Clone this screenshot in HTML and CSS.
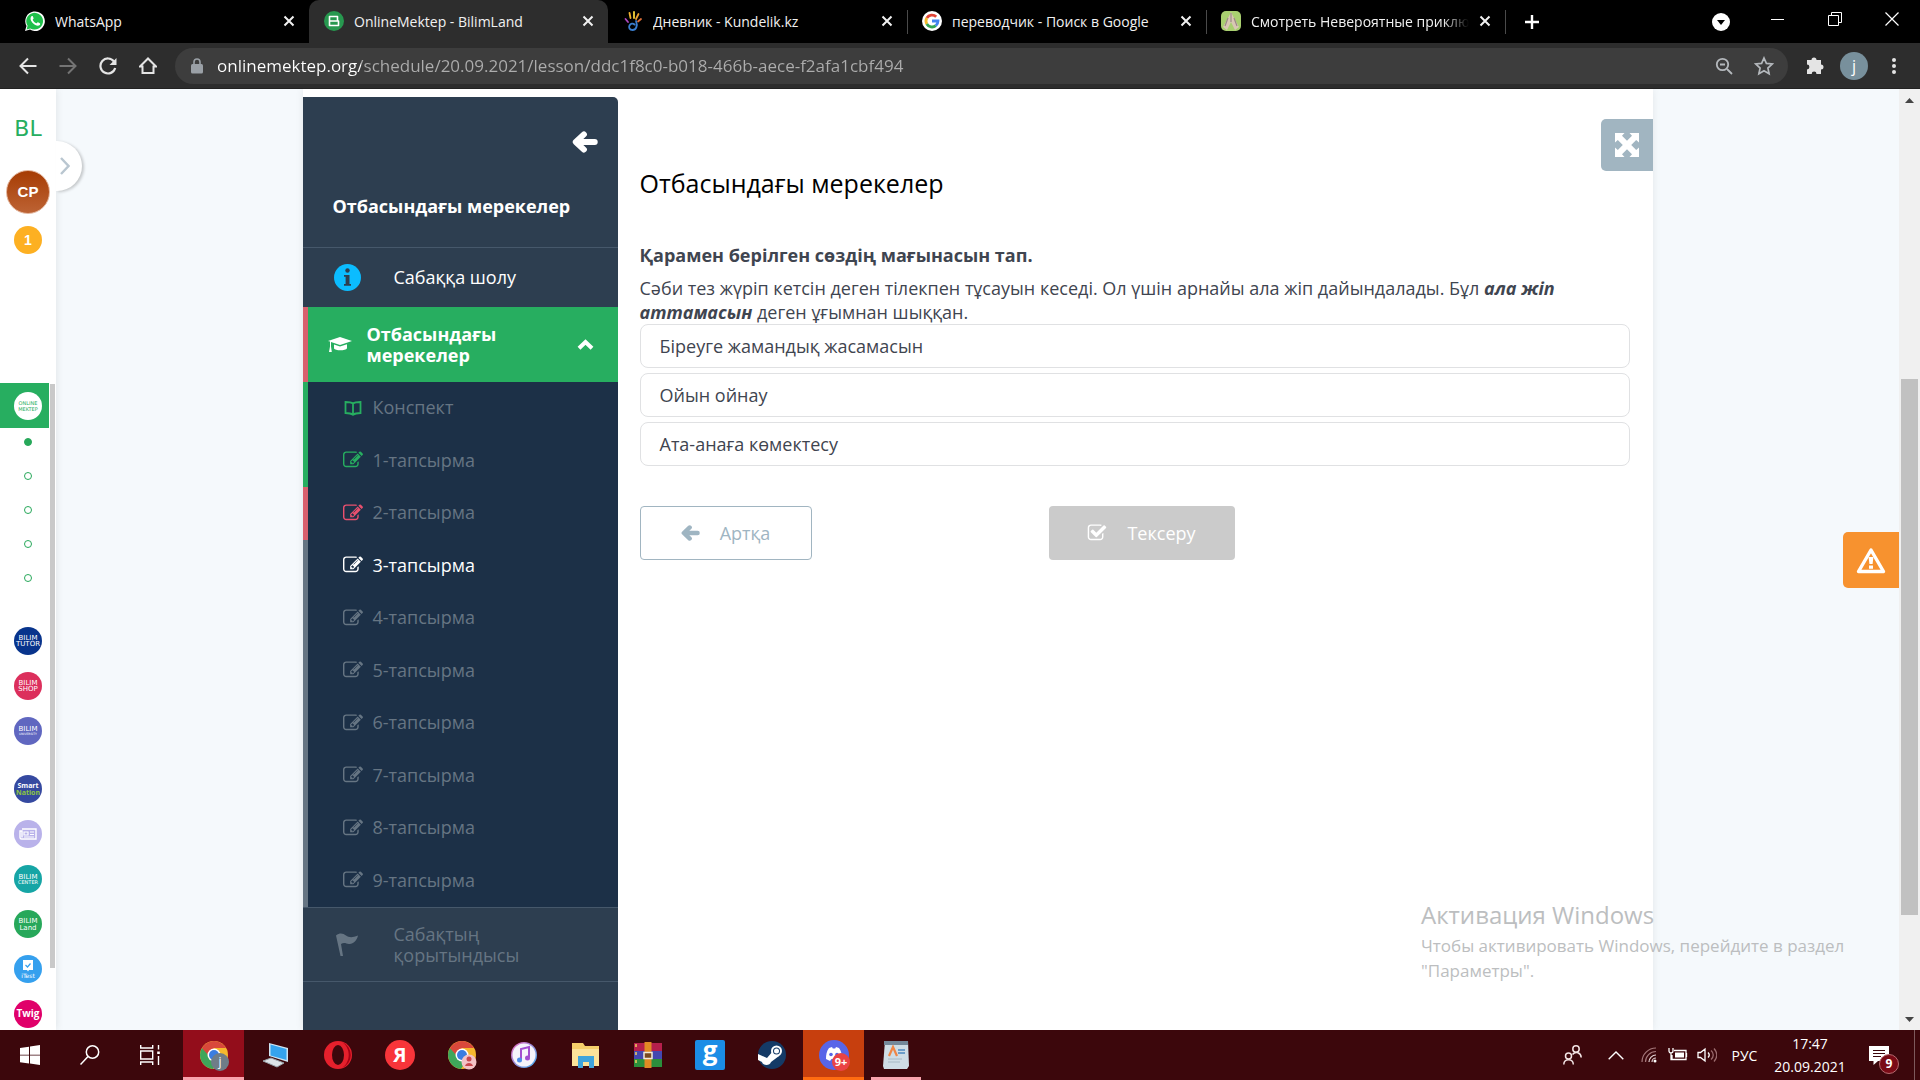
FILE: index.html
```html
<!DOCTYPE html>
<html lang="kk">
<head>
    <meta charset="UTF-8">
    <meta name="viewport" content="width=device-width, initial-scale=1.0">
    <title>OnlineMektep - BilimLand</title>
    <link rel="stylesheet" href="styles.css">
</head>
<body>
    <!-- shared icons -->
    <svg class="sprite" width="0" height="0">
        <symbol id="i-edit" viewBox="0 0 1792 1792"><path d="M888 1184l116-116-152-152-116 116v56h96v96h56zm440-720q-16-16-33 1l-350 350q-17 17-1 33t33-1l350-350q17-17 1-33zm80 594v190q0 119-84.500 203.500t-203.500 84.500h-832q-119 0-203.500-84.500t-84.500-203.500v-832q0-119 84.500-203.500t203.500-84.500h832q63 0 117 25 15 7 18 23 3 17-9 29l-49 49q-14 14-32 8-23-6-45-6h-832q-66 0-113 47t-47 113v832q0 66 47 113t113 47h832q66 0 113-47t47-113v-126q0-13 9-22l64-64q15-15 35-7t20 29zm-96-738l288 288-672 672h-288v-288zm444 132l-92 92-288-288 92-92q28-28 68-28t68 28l152 152q28 28 28 68t-28 68z"/></symbol>
        <symbol id="i-check" viewBox="0 0 1792 1792"><path d="M1472 930v318q0 119-84.500 203.500t-203.500 84.500h-832q-119 0-203.500-84.500t-84.500-203.500v-832q0-119 84.500-203.500t203.500-84.500h832q63 0 117 25 15 7 18 23 3 17-9 29l-49 49q-10 10-23 10-3 0-9-2-23-6-45-6h-832q-66 0-113 47t-47 113v832q0 66 47 113t113 47h832q66 0 113-47t47-113v-254q0-13 9-22l64-64q10-10 23-10 6 0 12 3 20 8 20 29zm231-489l-814 814q-24 24-57 24t-57-24l-430-430q-24-24-24-57t24-57l110-110q24-24 57-24t57 24l263 263 647-647q24-24 57-24t57 24l110 110q24 24 24 57t-24 57z"/></symbol>
        <symbol id="i-back" viewBox="0 0 24 20"><path d="M11 3L3.500 10l7.500 7M4 10h17" fill="none" stroke="currentColor" stroke-width="5.500" stroke-linecap="round" stroke-linejoin="round"/></symbol>
        <symbol id="i-x" viewBox="0 0 12 12"><path d="M1.500 1.500l9 9m0-9l-9 9" stroke="currentColor" stroke-width="2"/></symbol>
        <symbol id="i-chrome" viewBox="0 0 32 32">
            <circle cx="16" cy="16" r="14" fill="#f5b82e"/>
            <path d="M3.900 9A14 14 0 0 0 15 30l7-11-6-3z" fill="#3fa65a"/>
            <path d="M3.900 9A14 14 0 0 1 28.100 9H16l-6 7z" fill="#d9483b"/>
            <circle cx="16" cy="16" r="6.500" fill="#fff"/>
            <circle cx="16" cy="16" r="5" fill="#3b7de0"/>
        </symbol>
    </svg>

    <div class="tabs">
        <div class="tab">
            <svg class="fav" viewBox="0 0 20 20"><path d="M0 20l1.500-5A9.800 9.800 0 1 1 5 18.600z" fill="#fff"/><path d="M1.600 18.400l1-3.600A8.400 8.400 0 1 1 5.300 17.400z" fill="#1fc04b"/><path d="M6.500 5.200c-2 2-.5 5 1.500 7s5 3.500 6.800 1.700c.6-.8.500-1.400 0-1.700l-1.800-1c-.8-.2-1 1-1.700 1.100-1.200-.3-3.200-2.200-3.600-3.500 0-.6 1-.9.900-1.600L7.800 5.200c-.3-.4-.9-.3-1.300 0z" fill="#fff"/></svg>
            <span class="tab-title">WhatsApp</span>
            <button class="tab-close" aria-label="Close"><svg width="12" height="12"><use href="#i-x"/></svg></button>
        </div>
        <div class="tab active">
            <svg class="fav" viewBox="0 0 20 20"><circle cx="10" cy="10" r="10" fill="#27984f"/><path d="M5.500 5.500h8v4.500h-8zM5.500 10h9v4.500h-9z" fill="none" stroke="#fff" stroke-width="1.600" stroke-linejoin="round"/></svg>
            <span class="tab-title">OnlineMektep - BilimLand</span>
            <button class="tab-close" aria-label="Close"><svg width="12" height="12"><use href="#i-x"/></svg></button>
        </div>
        <div class="tab">
            <svg class="fav" viewBox="0 0 20 20" fill="none" stroke-linecap="round" stroke-width="1.800"><path d="M6.500 2l1 5" stroke="#f0b030"/><path d="M11 1v6" stroke="#f7d43a"/><path d="M15.500 3L13 8" stroke="#e8a030"/><path d="M2.500 8l2.500 3" stroke="#b04ac0"/><path d="M18 8l-3 2.500" stroke="#e0703a"/><path d="M13 10c2 5 0 9-3.500 9-3 0-4-2.500-3-4.500s3.500-2.500 5-1" stroke="#3b7fd0"/></svg>
            <span class="tab-title">Дневник - Kundelik.kz</span>
            <button class="tab-close" aria-label="Close"><svg width="12" height="12"><use href="#i-x"/></svg></button>
        </div>
        <div class="tab split">
            <svg class="fav" viewBox="0 0 20 20"><circle cx="10" cy="10" r="10" fill="#fff"/><g fill="none" stroke-width="2.800"><path d="M14.200 5.800A6 6 0 0 0 4.800 7" stroke="#e04437"/><path d="M4.800 7a6 6 0 0 0 0 6" stroke="#f3b92c"/><path d="M4.800 13a6 6 0 0 0 9 1.600" stroke="#33a552"/><path d="M13.800 14.600A6 6 0 0 0 16 10h-6" stroke="#4283ee"/></g></svg>
            <span class="tab-title">переводчик - Поиск в Google</span>
            <button class="tab-close" aria-label="Close"><svg width="12" height="12"><use href="#i-x"/></svg></button>
        </div>
        <div class="tab split">
            <svg class="fav" viewBox="0 0 20 20"><rect width="20" height="20" rx="5" fill="#a9cf70"/><path d="M10 1l3 6 5 9-4 3-4-8-4 8-4-3 5-9z" fill="#d9c7b4"/><path d="M10 2v9M7 7l-3 8m9-8l3 8" stroke="#9a8a86" stroke-width="1.200"/></svg>
            <span class="tab-title fade">Смотреть Невероятные приклю</span>
            <button class="tab-close" aria-label="Close"><svg width="12" height="12"><use href="#i-x"/></svg></button>
        </div>
        <div class="tab-new split">
            <button aria-label="New tab"><svg width="16" height="16" viewBox="0 0 16 16"><path d="M8 1v14M1 8h14" stroke="#fff" stroke-width="2.400"/></svg></button>
        </div>
        <div class="win-buttons">
            <button class="tab-search" aria-label="Search tabs"><svg width="18" height="18" viewBox="0 0 18 18"><circle cx="9" cy="9" r="9" fill="#fff"/><path d="M5 7h8l-4 5z" fill="#000"/></svg></button>
            <button aria-label="Minimize"><svg width="14" height="14" viewBox="0 0 14 14"><path d="M0 7.500h13" stroke="#fff"/></svg></button>
            <button aria-label="Restore"><svg width="14" height="14" viewBox="0 0 14 14" fill="none" stroke="#fff"><path d="M.5 3.500h10v10H.5zM3.500 3V.5h10v10H11"/></svg></button>
            <button aria-label="Close window"><svg width="14" height="14" viewBox="0 0 14 14"><path d="M.5 .5l13 13m0-13l-13 13" stroke="#fff" stroke-width="1.200"/></svg></button>
        </div>
    </div>

    <div class="toolbar">
        <button aria-label="Back"><svg width="18" height="18" viewBox="0 0 18 18" fill="none" stroke="#e4e4e4" stroke-width="2"><path d="M9 1.500L1.500 9 9 16.500M2 9h15.500"/></svg></button>
        <button aria-label="Forward"><svg width="18" height="18" viewBox="0 0 18 18" fill="none" stroke="#747474" stroke-width="2"><path d="M9 1.500L16.500 9 9 16.500M16 9H.5"/></svg></button>
        <button aria-label="Reload"><svg width="18" height="18" viewBox="0 0 18 18" fill="none" stroke="#e4e4e4" stroke-width="2.200"><path d="M15 4.500A7.500 7.500 0 1 0 16.200 11"/><path d="M17.500 1v7h-7z" fill="#e4e4e4" stroke="none"/></svg></button>
        <button aria-label="Home"><svg width="18" height="18" viewBox="0 0 18 18" fill="none" stroke="#e4e4e4" stroke-width="2"><path d="M1 9.500l8-8 8 8h-2.500V16h-11V9.500z"/></svg></button>
        <div class="address">
            <svg width="12" height="16" viewBox="0 0 12 16"><rect y="6" width="12" height="9.500" rx="1.500" fill="#9aa0a6"/><path d="M3 6V4a3 3 0 0 1 6 0v2" fill="none" stroke="#9aa0a6" stroke-width="1.600"/></svg>
            <input type="text" aria-label="Address" value="onlinemektep.org/schedule/20.09.2021/lesson/ddc1f8c0-b018-466b-aece-f2afa1cbf494">
            <button aria-label="Zoom"><svg width="18" height="18" viewBox="0 0 18 18" fill="none" stroke="#b4b8bc" stroke-width="1.800"><circle cx="7.500" cy="7.500" r="5.700"/><path d="M12 12l5 5M5 7.500h5"/></svg></button>
            <button aria-label="Bookmark"><svg width="20" height="20" viewBox="0 0 20 20" fill="none" stroke="#b4b8bc" stroke-width="1.700"><path d="M10 2l2.400 5.400 5.900.6-4.400 4 1.200 5.800L10 14.800l-5.100 3L6.100 12 1.700 8l5.900-.6z"/></svg></button>
        </div>
        <button aria-label="Extensions"><svg width="19" height="19" viewBox="0 0 19 19" fill="#e4e4e4"><path d="M2 4h4.500a2.500 2.500 0 1 1 5 0H16v4.500a2.500 2.500 0 1 1 0 5V18h-4.500a2.400 2.400 0 1 0-4.800 0H2v-4.600a2.400 2.400 0 1 0 0-4.800z"/></svg></button>
        <button class="profile">j</button>
        <button aria-label="Menu"><svg width="6" height="18" viewBox="0 0 6 18" fill="#e4e4e4"><circle cx="3" cy="3" r="2"/><circle cx="3" cy="9" r="2"/><circle cx="3" cy="15" r="2"/></svg></button>
    </div>

    <div class="page">
        <nav class="rail">
            <a class="rail-logo" href="#">BL</a>
            <a class="avatar" href="#">СР</a>
            <a class="coins" href="#">1</a>
            <button class="rail-toggle" aria-label="Menu"><svg width="10" height="18" viewBox="0 0 10 18" fill="none" stroke="#b9c6d0" stroke-width="2.400"><path d="M1 1l7.500 8L1 17"/></svg></button>
            <div class="rail-scroll">
                <div class="rail-links">
                    <a class="rail-current" href="#"><svg class="brand" viewBox="0 0 28 28"><circle cx="14" cy="14" r="14" fill="#fff"/><text class="sm" x="14" y="13" fill="#27ae60">ONLINE</text><text class="sm" x="14" y="19" fill="#27ae60">MEKTEP</text></svg></a>
                    <div class="dots"><a class="on" href="#" aria-label="1"></a><a href="#" aria-label="2"></a><a href="#" aria-label="3"></a><a href="#" aria-label="4"></a><a href="#" aria-label="5"></a></div>
                    <div class="brands">
                        <a href="#"><svg class="brand" viewBox="0 0 28 28"><circle cx="14" cy="14" r="14" fill="#08348c"/><text class="md" x="14" y="13">BILIM</text><text class="md" x="14" y="19">TUTOR</text></svg></a>
                        <a href="#"><svg class="brand" viewBox="0 0 28 28"><circle cx="14" cy="14" r="14" fill="#dc2f5c"/><text class="md" x="14" y="13">BILIM</text><text class="md" x="14" y="19">SHOP</text></svg></a>
                        <a href="#"><svg class="brand" viewBox="0 0 28 28"><circle cx="14" cy="14" r="14" fill="#6067c0"/><text class="md" x="14" y="14">BILIM</text><text class="xs" x="14" y="18">UNIVERSITY</text></svg></a>
                    </div>
                    <div class="brands">
                        <a href="#"><svg class="brand" viewBox="0 0 28 28"><circle cx="14" cy="14" r="14" fill="#3549a0"/><text class="lg" x="14" y="13">Smart</text><text class="lg" x="14" y="20" fill="#8dc63f">Nation</text></svg></a>
                        <a href="#"><svg class="brand" viewBox="0 0 28 28"><circle cx="14" cy="14" r="14" fill="#b9b2ea"/><path d="M8 9h14v10H7.500A1.500 1.500 0 0 1 6 17.500V11h2v6.500" fill="none" stroke="#fff" stroke-width="1.400"/><path d="M10 12h4v3h-4zM16 12h4M16 14.500h4M10 17h10" fill="none" stroke="#fff" stroke-width="1.200"/></svg></a>
                        <a href="#"><svg class="brand" viewBox="0 0 28 28"><circle cx="14" cy="14" r="14" fill="#16a5a5"/><text class="md" x="14" y="14">BILIM</text><text class="sm" x="14" y="19">CENTER</text></svg></a>
                        <a href="#"><svg class="brand" viewBox="0 0 28 28"><circle cx="14" cy="14" r="14" fill="#27a85a"/><text class="md" x="14" y="13">BILIM</text><text class="md" x="14" y="20">Land</text></svg></a>
                        <a href="#"><svg class="brand" viewBox="0 0 28 28"><circle cx="14" cy="14" r="14" fill="#35a0ee"/><path d="M9 5h10v10h-4l-1 1.500-1-1.500H9z" fill="#fff"/><path d="M11.500 10l2 2 3-3.500" fill="none" stroke="#35a0ee" stroke-width="1.200"/><text x="14" y="23">iTest</text></svg></a>
                        <a href="#"><svg class="brand" viewBox="0 0 28 28"><circle cx="14" cy="14" r="14" fill="#e0006a"/><text class="xl" x="14" y="17">Twig</text></svg></a>
                    </div>
                </div>
                <div class="rail-bar"></div>
            </div>
        </nav>

        <main class="stage">
            <div class="card">
                <aside class="lesson-nav">
                    <div class="nav-head">
                        <button aria-label="Артқа"><svg width="26" height="22"><use href="#i-back"/></svg></button>
                        <h2>Отбасындағы мерекелер</h2>
                    </div>
                    <a class="nav-item" href="#">
                        <svg width="27" height="27" viewBox="0 0 27 27"><circle cx="13.500" cy="13.500" r="13.500" fill="#0bbcff"/><circle cx="13.500" cy="6.500" r="2.200" fill="#2d3e50"/><path d="M10 11h5.500v9H17v1.800h-7V20h1.600v-7.200H10z" fill="#2d3e50"/></svg>
                        <span>Сабаққа шолу</span>
                    </a>
                    <a class="nav-section" href="#">
                        <svg width="24" height="18" viewBox="0 0 24 18" fill="#fff"><path d="M12 1l12 4-12 4L3 6v4.500l.8 5.500H1l1-5.500V5.600L0 5z"/><path d="M6 8.500l6 2 7-2.300v4C18 15 7 15 6 12.500z"/></svg>
                        <span>Отбасындағы мерекелер</span>
                        <svg width="17" height="11" viewBox="0 0 17 11"><path d="M2 9.300l6.500-6.300L15 9.300" fill="none" stroke="#fff" stroke-width="4"/></svg>
                    </a>
                    <div class="tasks">
                        <a class="task done" href="#"><svg viewBox="0 0 20 20" fill="none" stroke="currentColor" stroke-width="1.800"><path d="M10 5.500C8 4 5 4 2.500 4v11c3 0 5.500.2 7.500 1.800 2-1.600 4.500-1.800 7.500-1.800V4C15 4 12 4 10 5.500zM10 5.500v11"/></svg>Конспект</a>
                        <a class="task done" href="#"><svg><use href="#i-edit"/></svg>1-тапсырма</a>
                        <a class="task wrong" href="#"><svg><use href="#i-edit"/></svg>2-тапсырма</a>
                        <a class="task current" href="#"><svg><use href="#i-edit"/></svg>3-тапсырма</a>
                        <a class="task" href="#"><svg><use href="#i-edit"/></svg>4-тапсырма</a>
                        <a class="task" href="#"><svg><use href="#i-edit"/></svg>5-тапсырма</a>
                        <a class="task" href="#"><svg><use href="#i-edit"/></svg>6-тапсырма</a>
                        <a class="task" href="#"><svg><use href="#i-edit"/></svg>7-тапсырма</a>
                        <a class="task" href="#"><svg><use href="#i-edit"/></svg>8-тапсырма</a>
                        <a class="task" href="#"><svg><use href="#i-edit"/></svg>9-тапсырма</a>
                    </div>
                    <a class="nav-item summary" href="#">
                        <svg width="27" height="27" viewBox="0 0 27 27" fill="#667583"><path d="M2 4.500c4-3 7-2 10 0s6 2.500 12 0c-1 5-5 9-9 8.500-3-.5-5-2-8 0l2 12H6.500z"/></svg>
                        <span>Сабақтың қорытындысы</span>
                    </a>
                </aside>

                <section class="lesson">
                    <button class="expand" aria-label="Fullscreen"><svg width="24" height="24" viewBox="0 0 24 24" fill="#fff"><path d="M0 0h9.500L7 2.800l5 5 5-5L14.500 0H24v9.500L21.200 7l-5 5 5 5 2.800-2.500V24h-9.500l2.500-2.800-5-5-5 5L9.500 24H0v-9.500L2.800 17l5-5-5-5L0 9.500z"/></svg></button>
                    <h1>Отбасындағы мерекелер</h1>
                    <p class="question">Қарамен берілген сөздің мағынасын тап.</p>
                    <p class="text">Сәби тез жүріп кетсін деген тілекпен тұсауын кеседі. Ол үшін арнайы ала жіп дайындалады. Бұл <b><i>ала жіп аттамасын</i></b> деген ұғымнан шыққан.</p>
                    <div class="options">
                        <button>Біреуге жамандық жасамасын</button>
                        <button>Ойын ойнау</button>
                        <button>Ата-анаға көмектесу</button>
                    </div>
                    <div class="actions">
                        <button class="prev"><svg width="19" height="16"><use href="#i-back"/></svg>Артқа</button>
                        <button class="check"><svg width="20" height="20"><use href="#i-check"/></svg>Тексеру</button>
                    </div>
                </section>
            </div>
            <button class="report" aria-label="Report"><svg width="30" height="27" viewBox="0 0 30 27"><path d="M15 3L27.500 24.500h-25z" fill="none" stroke="#fff" stroke-width="3.400" stroke-linejoin="round"/><path d="M12.600 10h4.800l-.8 7h-3.200zM13 18.500h4v3.200h-4z" fill="#fff"/></svg></button>
        </main>

        <div class="scrollbar">
            <svg width="9" height="5" viewBox="0 0 9 5"><path d="M0 5L4.500 0 9 5z" fill="#454545"/></svg>
            <div class="track"><div class="thumb"></div></div>
            <svg width="9" height="5" viewBox="0 0 9 5"><path d="M0 0l4.500 5L9 0z" fill="#454545"/></svg>
        </div>

        <div class="watermark">
            <p class="wm-title">Активация Windows</p>
            <p>Чтобы активировать Windows, перейдите в раздел "Параметры".</p>
        </div>
    </div>

    <footer class="taskbar">
        <div class="system">
            <button aria-label="Start"><svg width="20" height="20" viewBox="0 0 20 20" fill="#fff"><path d="M0 3l9-1.300v8H0zM10 1.500L20 0v9.700H10zM0 10.500h9v8L0 17.200zM10 10.500h10V20l-10-1.500z"/></svg></button>
            <button aria-label="Search"><svg width="20" height="20" viewBox="0 0 20 20" fill="none" stroke="#fff" stroke-width="1.500"><circle cx="12.500" cy="7" r="6.200"/><path d="M8 11.500L.5 19.500"/></svg></button>
            <button aria-label="Task view"><svg width="20" height="20" viewBox="0 0 20 20" fill="none" stroke="#fff" stroke-width="1.400"><path d="M.7 0v3h12V0M.7 20v-3h12v3M.7 6h12v8H.7zM18.500 0v4.500M18.500 11v9"/><path d="M17.200 6.500h2.600V9h-2.600z" fill="#fff" stroke="none"/></svg></button>
        </div>
        <div class="apps">
            <button class="app active" aria-label="Chrome"><svg viewBox="0 0 32 32"><use href="#i-chrome"/><circle cx="22" cy="23" r="9" fill="#6f7d88"/><text class="who" x="22" y="27">j</text></svg></button>
            <button class="app" aria-label="Computer"><svg viewBox="0 0 32 32"><path d="M9 4l19 5v14L9 17z" fill="#cfe4f2"/><path d="M10.500 5.500l16 4.500v11l-16-4.500z" fill="#35a3ee"/><path d="M3 22l8-3 13 5-7 4z" fill="#dde3e8" stroke="#98a2aa"/></svg></button>
            <button class="app" aria-label="Opera"><svg viewBox="0 0 32 32"><circle cx="16" cy="16" r="14" fill="#e5202c"/><path d="M20 3a14 14 0 0 1 0 26c9-6 9-20 0-26z" fill="#a70014"/><ellipse cx="16" cy="16" rx="6" ry="10" fill="#3c070c"/></svg></button>
            <button class="app" aria-label="Yandex"><svg viewBox="0 0 32 32"><circle cx="16" cy="16" r="15" fill="#f8353a"/><text class="ya" x="16" y="23">Я</text></svg></button>
            <button class="app" aria-label="Chrome"><svg viewBox="0 0 32 32"><use href="#i-chrome"/><circle cx="23" cy="23" r="7.500" fill="#f3c3c6"/><circle cx="23" cy="20" r="2.500" fill="#c9474d"/><path d="M19 27c1-4 7-4 8 0z" fill="#c9474d"/></svg></button>
            <button class="app" aria-label="iTunes"><svg viewBox="0 0 32 32"><defs><linearGradient id="it" x2="1" y2="1"><stop stop-color="#f06ac0"/><stop offset="1" stop-color="#42b4f5"/></linearGradient></defs><circle cx="16" cy="16" r="13" fill="url(#it)"/><circle cx="16" cy="16" r="11.500" fill="#f6f4fb"/><path d="M13 20.500V10l8-2v10.500" fill="none" stroke="#a34fd0" stroke-width="2"/><circle cx="11.500" cy="21" r="2.500" fill="#4f8ee8"/><circle cx="19.500" cy="19" r="2.500" fill="#a34fd0"/></svg></button>
            <button class="app" aria-label="Explorer"><svg viewBox="0 0 32 32"><path d="M2 4h11l2 3h14v20H2z" fill="#f6cf6b"/><path d="M2 10h27v17H2z" fill="#fce39a"/><path d="M8 17h16v12h-5v-6h-6v6H8z" fill="#3ea4dc"/></svg></button>
            <button class="app" aria-label="WinRAR"><svg viewBox="0 0 32 32"><path d="M2 4h28v8H2z" fill="#b51f4c"/><path d="M2 12h28v8H2z" fill="#4348b0"/><path d="M2 20h28v8H2z" fill="#2b8f3c"/><path d="M4 5v22" stroke="#f0d060" stroke-width="1.500" stroke-dasharray="3 5"/><path d="M12.500 3h7v26h-7z" fill="#e08a24"/><path d="M12 13.500h8v6h-8z" fill="#7a4a20" stroke="#f2ead8" stroke-width="1.500"/></svg></button>
            <button class="app" aria-label="g"><svg viewBox="0 0 32 32"><rect x="1" y="1" width="30" height="30" rx="2" fill="#1b8de6"/><text class="gg" x="16" y="21">g</text></svg></button>
            <button class="app" aria-label="Steam"><svg viewBox="0 0 32 32"><circle cx="16" cy="16" r="14" fill="#143a66"/><path d="M2 15l9 4 6-7 6 5-8 6c-1 4-8 4-9 0l-4-2z" fill="#fff"/><circle cx="20.500" cy="12" r="5.500" fill="#fff"/><circle cx="20.500" cy="12" r="3.500" fill="#143a66"/><circle cx="20.500" cy="12" r="2.500" fill="#fff"/></svg></button>
            <button class="app alert" aria-label="Discord"><svg viewBox="0 0 32 32"><circle cx="16" cy="16" r="15" fill="#5865e8"/><path d="M8 20c0-4 .5-8 3-11l3-1 .8 1.500h2.400L18 8l3 1c2.500 3 3 7 3 11l-4 2-1.500-2h-5L12 22z" fill="#fff"/><circle cx="13" cy="15.500" r="1.800" fill="#5865e8"/><circle cx="19" cy="15.500" r="1.800" fill="#5865e8"/><circle cx="23" cy="23" r="9" fill="#ea4345"/><text class="cnt" x="23" y="27">9+</text></svg></button>
            <button class="app open" aria-label="WordPad"><svg viewBox="0 0 32 32"><path d="M5 2h23l1 25-2 3H4l-1-3z" fill="#cfdde6"/><path d="M4 2h24v4H4z" fill="#74889a"/><path d="M9 17l4-9 4 9" fill="none" stroke="#f08545" stroke-width="2.200"/><path d="M18 11h7M18 14h7" stroke="#4d88c0" stroke-width="1.500"/><path d="M8 20h14M8 23h12" stroke="#a8bac6"/></svg></button>
        </div>
        <div class="tray">
            <button class="people" aria-label="People"><svg width="19" height="20" viewBox="0 0 19 20" fill="none" stroke="#f3e4e5" stroke-width="1.500"><circle cx="5.500" cy="11" r="3"/><path d="M.8 19.500c0-6.500 9.500-6.500 9.500 0"/><circle cx="13" cy="4" r="3.200"/><path d="M9.500 9.500c3-3.500 8.500-2 8.700 3"/></svg></button>
            <button class="more" aria-label="Hidden icons"><svg width="16" height="9" viewBox="0 0 16 9"><path d="M.7 8.300L8 1l7.300 7.300" fill="none" stroke="#fff" stroke-width="1.400"/></svg></button>
            <button class="sm" aria-label="Network"><svg width="16" height="16" viewBox="0 0 16 16" fill="none" stroke="#a5787b" stroke-width="1.200"><path d="M1 15A14 14 0 0 1 15 1M4.500 15A10.500 10.500 0 0 1 15 4.500"/><path d="M8 15a7 7 0 0 1 7-7M11 15a4 4 0 0 1 4-4" stroke="#e6d5d6"/><circle cx="14" cy="14" r="1.500" fill="#fff" stroke="none"/></svg></button>
            <button class="sm" aria-label="Battery"><svg width="20" height="16" viewBox="0 0 20 16" fill="none" stroke="#fff" stroke-width="1.300"><path d="M6 3.500h12v9H4V8M18.500 6v4M1 1v3c0 2.500 4 2.500 4 0V1M3 6v6.500h2"/><path d="M7 5.500h9v5H7z" fill="#fff" stroke="none"/></svg></button>
            <button class="sm" aria-label="Volume"><svg width="20" height="16" viewBox="0 0 20 16" fill="none" stroke="#fff" stroke-width="1.300"><path d="M1 5.500h2.500L8 2v12l-4.500-3.500H1zM11 5.500c1.500 1.500 1.500 3.500 0 5"/><path d="M14 3.500c3 2.500 3 6.500 0 9M17 1.500c3.500 4 3.500 9 0 13" stroke="#9a6a6d"/></svg></button>
            <button class="lang">РУС</button>
            <div class="clock"><span>17:47</span><span>20.09.2021</span></div>
            <button class="notes" aria-label="Notifications"><svg width="20" height="19" viewBox="0 0 20 19"><path d="M0 0h20v15H9l-4.500 4v-4H0z" fill="#fff"/><path d="M4 4.500h12M4 7.500h12M4 10.500h8" stroke="#3c070c" stroke-width="1.200"/></svg><span class="badge">9</span></button>
        </div>
    </footer>
</body>
</html>
```
FILE: styles.css
```css
* {
    box-sizing: border-box;
}
body {
    margin: 0;
    height: 100vh;
    display: flex;
    flex-direction: column;
    overflow: hidden;
    font-family: "Open Sans", "Noto Sans", sans-serif;
    background: #f5f9fc;
    color: #3f4550;
}
button {
    border: 0;
    padding: 0;
    background: none;
    font: inherit;
    color: inherit;
    display: flex;
    align-items: center;
    justify-content: center;
    flex-shrink: 0;
}
a {
    color: inherit;
    text-decoration: none;
}
h1, h2, p {
    margin: 0;
}
svg {
    flex-shrink: 0;
}
svg:not([fill]) {
    fill: currentColor;
}
.sprite {
    position: absolute;
}

/* browser tabs */
.tabs {
    display: flex;
    height: 43px;
    padding-left: 10px;
    background: #000;
    color: #f1f1f1;
    font-size: 14px;
    flex-shrink: 0;
}
.tab {
    flex: 0 1 299px;
    min-width: 0;
    display: flex;
    align-items: center;
    gap: 10px;
    padding: 0 14px 1px 15px;
}
.tab.active {
    background: #2d2d2d;
    border-radius: 10px 10px 0 0;
}
.tab.split, .tab-new {
    background: linear-gradient(#4a4a4a, #4a4a4a) 0 10px / 1px 24px no-repeat;
}
.fav {
    width: 20px;
    height: 20px;
}
.tab-title {
    flex: 1;
    white-space: nowrap;
    overflow: hidden;
}
.tab-title.fade {
    mask-image: linear-gradient(to right, #000 88%, transparent);
}
.tab-new {
    display: flex;
    padding-left: 19px;
}
.win-buttons {
    display: flex;
    margin-left: auto;
}
.win-buttons button {
    width: 57px;
    height: 38px;
}
.win-buttons .tab-search {
    height: 43px;
}

/* toolbar */
.toolbar {
    display: flex;
    align-items: center;
    height: 46px;
    padding: 0 6px 0 8px;
    background: #2d2d2d;
    border-bottom: 1px solid #222;
    flex-shrink: 0;
}
.toolbar > button {
    width: 40px;
    height: 36px;
}
.address {
    flex: 1;
    display: flex;
    align-items: center;
    height: 36px;
    margin: 0 6px 0 7px;
    padding: 0 4px 0 16px;
    border-radius: 18px;
    background: #3d3d3d;
}
.address input {
    flex: 1;
    min-width: 0;
    border: 0;
    padding: 0 0 0 14px;
    outline: 0;
    font: 17px "Open Sans", sans-serif;
    color: transparent;
    background: linear-gradient(to right, #fff 158px, #adadad 158px);
    background-clip: text;
    -webkit-background-clip: text;
}
.address button {
    width: 40px;
}
.toolbar .profile {
    width: 28px;
    height: 28px;
    margin: 0 6px;
    border-radius: 50%;
    background: #78909c;
    color: #fff;
    font-size: 16px;
}

/* page */
.page {
    position: relative;
    flex: 1;
    min-height: 0;
    display: flex;
    overflow: hidden;
}
.rail {
    position: relative;
    width: 56px;
    flex-shrink: 0;
    display: flex;
    flex-direction: column;
    align-items: center;
    padding-top: 28px;
    background: #fff;
    box-shadow: 0 0 8px rgba(0, 0, 0, 0.1);
}
.rail-logo {
    color: #27ae60;
    font: 22px/24px "DejaVu Sans", sans-serif;
}
.avatar {
    width: 44px;
    height: 44px;
    margin-top: 29px;
    border: 1px solid #e3b49b;
    border-radius: 50%;
    background: linear-gradient(#a63c04, #bd6334);
    color: #fff;
    font: bold 15px/42px "Liberation Sans", sans-serif;
    text-align: center;
}
.coins {
    width: 28px;
    height: 28px;
    margin-top: 12px;
    border-radius: 50%;
    background: #fdb022;
    color: #fff;
    font: bold 14px/28px "Liberation Sans", sans-serif;
    text-align: center;
}
.rail-toggle {
    position: absolute;
    left: 56px;
    top: 52px;
    width: 26px;
    height: 50px;
    padding-right: 8px;
    border-radius: 0 25px 25px 0;
    background: #fff;
    box-shadow: 2px 1px 3px rgba(0, 0, 0, 0.2);
}
.rail-scroll {
    display: flex;
    width: 100%;
    flex: 1;
    min-height: 0;
    margin-top: 129px;
    overflow: hidden;
}
.rail-links {
    flex: 1;
}
.rail-bar {
    width: 5px;
    height: 584px;
    margin: 1px 1px 0;
    background: #c9c9c9;
}
.rail-current {
    display: flex;
    height: 45px;
    align-items: center;
    background: #27ae60;
}
.brand {
    display: block;
    width: 28px;
    height: 28px;
    margin-left: 14px;
}
.brand text {
    font: 6px "DejaVu Sans", sans-serif;
    text-anchor: middle;
}
.brand text:not([fill]) {
    fill: #fff;
}
.brand .xs {
    font-size: 3px;
}
.brand .sm {
    font-size: 5px;
}
.brand .md {
    font-size: 7px;
}
.brand .lg {
    font: bold 7px "Open Sans", sans-serif;
}
.brand .xl {
    font: bold 10px "Open Sans", sans-serif;
}
.dots {
    display: flex;
    flex-direction: column;
    align-items: center;
    gap: 26px;
    padding: 10px 0 45px 6px;
}
.dots a {
    width: 8px;
    height: 8px;
    border: 1px solid #27a85a;
    border-radius: 50%;
}
.dots .on {
    background: #27a85a;
}
.brands {
    display: flex;
    flex-direction: column;
    gap: 17px;
    margin-bottom: 30px;
}

.stage {
    flex: 1;
    min-width: 0;
    display: flex;
    justify-content: center;
    position: relative;
}
.card {
    display: flex;
    width: 100%;
    max-width: 1350px;
    background: #fff;
    box-shadow: 0 0 8px rgba(0, 0, 0, 0.08);
}
.lesson-nav {
    width: 315px;
    flex-shrink: 0;
    margin-top: 8px;
    border-radius: 0 5px 0 0;
    background: #2d3e50;
    color: #fff;
    font-size: 18px;
    line-height: 21px;
}
.nav-head {
    display: flex;
    flex-direction: column;
    height: 151px;
    padding: 34px 20px 0 30px;
    gap: 41px;
    border-bottom: 1px solid #46586b;
}
.nav-head button {
    align-self: flex-end;
}
.nav-head h2 {
    font-size: 18px;
    line-height: 24px;
}
.nav-item {
    display: flex;
    align-items: center;
    gap: 33px;
    height: 59px;
    padding: 0 60px 0 31px;
}
.nav-section {
    display: flex;
    align-items: center;
    gap: 15px;
    height: 75px;
    padding: 0 24px 0 20px;
    border-left: 5px solid #d9606e;
    background: #27ae60;
    font-weight: bold;
}
.nav-section span {
    flex: 1;
}
.tasks {
    display: grid;
    grid-auto-rows: 1fr;
    height: 525px;
    background: #1c3047;
}
.task {
    display: flex;
    align-items: center;
    gap: 10px;
    padding: 0 0 1px 35px;
    border-left: 5px solid #667583;
    color: #667583;
}
.task svg {
    width: 20px;
    height: 20px;
}
.task.done {
    border-color: #27ae60;
}
.task.wrong {
    border-color: #d9606e;
}
.task.done svg {
    color: #27ae60;
}
.task.wrong svg {
    color: #e8506e;
}
.task.current {
    color: #fff;
}
.summary {
    height: 75px;
    border: solid #46586b;
    border-width: 1px 0;
    color: #667583;
}

.lesson {
    flex: 1;
    min-width: 0;
    padding: 30px 23px 0 22px;
    font-size: 18px;
    line-height: 24px;
}
.expand {
    width: 52px;
    height: 52px;
    margin: 0 -23px 0 auto;
    border-radius: 5px 0 0 5px;
    background: #a1b5c1;
}
.lesson h1 {
    margin-bottom: 48px;
    color: #000;
    font-size: 25px;
    font-weight: normal;
    line-height: 24px;
}
.question {
    margin-bottom: 9px;
    font-weight: bold;
}
.options {
    display: grid;
    gap: 5px;
}
.options button {
    justify-content: flex-start;
    height: 44px;
    padding: 0 19px;
    border: 1px solid #e0e1e3;
    border-radius: 8px;
    background: #fff;
}
.actions {
    display: flex;
    gap: 237px;
    margin-top: 40px;
}
.actions button {
    height: 54px;
    gap: 20px;
    border-radius: 4px;
}
.prev {
    width: 172px;
}
.actions .prev {
    border: 1px solid #a1b5c1;
    color: #9fb5c2;
}
.check {
    width: 186px;
}
.actions .check {
    background: #cbcbcb;
    color: #fff;
}
.report {
    position: absolute;
    right: 0;
    top: 443px;
    width: 56px;
    height: 56px;
    border-radius: 5px 0 0 5px;
    background: #f7922f;
}
.scrollbar {
    width: 21px;
    display: flex;
    flex-direction: column;
    align-items: center;
    padding: 9px 0 8px;
    background: #f0f0f0;
}
.track {
    flex: 1;
    padding-top: 276px;
}
.thumb {
    width: 17px;
    height: 536px;
    background: #c1c1c1;
}
.watermark {
    position: absolute;
    left: 1421px;
    bottom: 47px;
    width: 440px;
    color: #bcbec0;
    font-size: 17px;
    line-height: 25px;
}
.wm-title {
    font-size: 24px;
    line-height: 36px;
}

/* taskbar */
.taskbar {
    display: flex;
    justify-content: space-between;
    height: 50px;
    flex-shrink: 0;
    background: #3c070c;
    color: #fff;
    font-size: 14px;
}
.system, .apps, .tray {
    display: flex;
}
.system button {
    width: 60px;
}
.apps {
    flex: 1;
    gap: 1px;
    padding-left: 3px;
}
.app {
    width: 61px;
    border-bottom: 3px solid transparent;
    border-top: 3px solid transparent;
}
.app svg {
    width: 32px;
    height: 32px;
}
.app.active {
    background: #930d1b;
    border-top-color: #930d1b;
    border-bottom-color: #f9a3ad;
}
.app.alert {
    background: #c73f0e;
    border-top-color: #c73f0e;
    border-bottom-color: #ff6c11;
}
.app.open {
    background: linear-gradient(#f9a3ad, #f9a3ad) center bottom / 50px 3px no-repeat border-box;
}
.ya, .gg, .cnt, .who {
    text-anchor: middle;
    fill: #fff;
    font: bold 20px "Open Sans", sans-serif;
}
.gg {
    font-size: 26px;
}
.cnt {
    font-size: 11px;
}
.who {
    font-size: 12px;
    font-weight: normal;
}
.tray {
    align-items: center;
}
.tray button {
    height: 50px;
}
.tray .people {
    width: 52px;
}
.tray .more {
    width: 36px;
}
.tray .sm {
    width: 29px;
}
.tray .lang {
    width: 47px;
}
.clock {
    width: 84px;
    display: flex;
    flex-direction: column;
    align-items: center;
    line-height: 23px;
}
.tray .notes {
    position: relative;
    width: 63px;
    margin-right: 5px;
    padding-right: 8px;
    border-right: 1px solid #7d595c;
}
.badge {
    position: absolute;
    left: 27px;
    top: 24px;
    width: 20px;
    height: 20px;
    border: 1px solid #b56b70;
    border-radius: 50%;
    background: #7a0a16;
    font-size: 12px;
    font-weight: bold;
    line-height: 18px;
}
```
